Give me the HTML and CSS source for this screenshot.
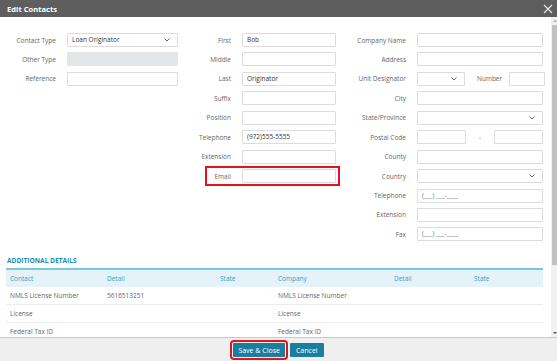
FILE: index.html
```html
<!DOCTYPE html>
<html lang="en">
<head>
    <meta charset="UTF-8">
    <title>Edit Contacts</title>
    <link rel="stylesheet" href="styles.css">
</head>
<body>
    <div class="modal">
        <header class="modal-header">
            <span class="title">Edit Contacts</span>
            <svg class="close" width="10" height="10" viewBox="0 0 10 10">
                <path d="M1 1 L9 9 M9 1 L1 9" stroke="#e6e6e6" stroke-width="1.2" fill="none"/>
            </svg>
        </header>

        <div class="modal-body">
            <div class="content">
                <div class="form">
                    <div class="col col-1">
                        <div class="row">
                            <label>Contact Type</label>
                            <div class="input select">Loan Originator
                                <svg class="chev" width="6" height="4" viewBox="0 0 6 4"><path d="M0.5 0.5 L3 3 L5.5 0.5" stroke="#666" fill="none"/></svg>
                            </div>
                        </div>
                        <div class="row">
                            <label>Other Type</label>
                            <div class="input disabled"></div>
                        </div>
                        <div class="row">
                            <label>Reference</label>
                            <div class="input"></div>
                        </div>
                    </div>

                    <div class="col col-2">
                        <div class="row"><label>First</label><div class="input">Bob</div></div>
                        <div class="row"><label>Middle</label><div class="input"></div></div>
                        <div class="row"><label>Last</label><div class="input">Originator</div></div>
                        <div class="row"><label>Suffix</label><div class="input"></div></div>
                        <div class="row"><label>Position</label><div class="input"></div></div>
                        <div class="row"><label>Telephone</label><div class="input">(972)555-5555</div></div>
                        <div class="row"><label>Extension</label><div class="input"></div></div>
                        <div class="row highlight"><label>Email</label><div class="input"></div></div>
                    </div>

                    <div class="col col-3">
                        <div class="row"><label>Company Name</label><div class="input"></div></div>
                        <div class="row"><label>Address</label><div class="input"></div></div>
                        <div class="row">
                            <label>Unit Designator</label>
                            <div class="input select unit">
                                <svg class="chev" width="6" height="4" viewBox="0 0 6 4"><path d="M0.5 0.5 L3 3 L5.5 0.5" stroke="#666" fill="none"/></svg>
                            </div>
                            <span class="sub-label">Number</span>
                            <div class="input number"></div>
                        </div>
                        <div class="row"><label>City</label><div class="input"></div></div>
                        <div class="row">
                            <label>State/Province</label>
                            <div class="input select">
                                <svg class="chev" width="6" height="4" viewBox="0 0 6 4"><path d="M0.5 0.5 L3 3 L5.5 0.5" stroke="#666" fill="none"/></svg>
                            </div>
                        </div>
                        <div class="row">
                            <label>Postal Code</label>
                            <div class="input zip"></div>
                            <span class="dash">-</span>
                            <div class="input zip"></div>
                        </div>
                        <div class="row"><label>County</label><div class="input"></div></div>
                        <div class="row">
                            <label>Country</label>
                            <div class="input select">
                                <svg class="chev" width="6" height="4" viewBox="0 0 6 4"><path d="M0.5 0.5 L3 3 L5.5 0.5" stroke="#666" fill="none"/></svg>
                            </div>
                        </div>
                        <div class="row"><label>Telephone</label><div class="input mask">(___) ___-____</div></div>
                        <div class="row"><label>Extension</label><div class="input"></div></div>
                        <div class="row"><label>Fax</label><div class="input mask">(___) ___-____</div></div>
                    </div>
                </div>

                <h3 class="section-title">Additional Details</h3>
                <table class="details">
                    <colgroup>
                        <col style="width:97px"><col style="width:113px"><col style="width:58px">
                        <col style="width:116px"><col style="width:80px"><col>
                    </colgroup>
                    <thead>
                        <tr><th>Contact</th><th>Detail</th><th>State</th><th>Company</th><th>Detail</th><th>State</th></tr>
                    </thead>
                    <tbody>
                        <tr><td>NMLS License Number</td><td>5616513251</td><td></td><td>NMLS License Number</td><td></td><td></td></tr>
                        <tr><td>License</td><td></td><td></td><td>License</td><td></td><td></td></tr>
                        <tr><td>Federal Tax ID</td><td></td><td></td><td>Federal Tax ID</td><td></td><td></td></tr>
                    </tbody>
                </table>
            </div>

            <div class="scrollbar">
                <span class="arrow up"></span>
                <div class="thumb"></div>
                <span class="arrow down"></span>
            </div>
        </div>

        <footer class="modal-footer">
            <button class="btn btn-primary">Save &amp; Close</button>
            <button class="btn">Cancel</button>
        </footer>
    </div>
</body>
</html>
```

FILE: styles.css
```css
body {
    margin: 0;
    font-family: 'Open Sans', sans-serif;
    font-size: 6.5px;
    color: #555;
    background: #fff;
}

.modal {
    width: 557px;
    height: 361px;
    display: flex;
    flex-direction: column;
    overflow: hidden;
}

.modal-header {
    height: 17px;
    flex: none;
    background: #5e5e5e;
    display: flex;
    align-items: center;
    justify-content: space-between;
    padding: 0 4px 0 7px;
}

.title {
    color: #fff;
    font-weight: bold;
    font-size: 7.6px;
}

.modal-body {
    flex: 1;
    display: flex;
    overflow: hidden;
    border-bottom: 1px solid #c9c9c9;
}

.content {
    flex: 1;
    padding: 16px 6px 0 8px;
}

.form {
    display: flex;
}

.col {
    display: flex;
    flex-direction: column;
    gap: 5.45px;
}

.row {
    display: flex;
    align-items: center;
    height: 14px;
}

.row label {
    text-align: right;
    margin-right: 11px;
    color: #666;
}

.col-1 label { width: 48px; }
.col-1 .input { width: 111px; }
.col-2 label { width: 53px; }
.col-2 .input { width: 94px; }
.col-3 label { width: 70px; }
.col-3 .input { width: 126px; }

.input {
    box-sizing: border-box;
    height: 14px;
    border: 1px solid #dcdcdc;
    border-radius: 1px;
    background: #fff;
    padding: 0 4px;
    line-height: 12px;
    color: #333;
    display: flex;
    align-items: center;
    justify-content: space-between;
}

.input.disabled {
    background: #e4e7ea;
    border-color: #e4e7ea;
}

.input.mask {
    color: #777;
}

.chev {
    margin-right: 3px;
}

.col-3 .input.unit { width: 48px; justify-content: flex-end; }
.col-3 .input.select { justify-content: flex-end; }
.col-1 .input.select { justify-content: space-between; }

.sub-label {
    color: #666;
    margin: 0 7px 0 12px;
}

.col-3 .input.number { width: 36px; }

.col-3 .input.zip { width: 49px; }

.dash {
    width: 28px;
    text-align: center;
    color: #888;
}

.highlight {
    position: relative;
}

.highlight::after {
    content: "";
    position: absolute;
    left: 27px;
    right: -4px;
    top: -3px;
    bottom: -3px;
    border: 2px solid #e2141c;
}

.section-title {
    margin: 15px 0 0 -1px;
    font-size: 6.6px;
    line-height: 10px;
    text-transform: uppercase;
    color: #1b8eb0;
    font-weight: bold;
}

.details {
    width: 537px;
    margin: 2px 0 0 -2px;
    border-collapse: collapse;
    table-layout: fixed;
    border-top: 2px solid #7cc4da;
}

.details th {
    background: #e3f3f8;
    color: #3a9fc0;
    font-weight: normal;
    text-align: left;
    height: 17px;
    padding: 0 4px;
}

.details td {
    height: 17px;
    padding: 0 4px;
    color: #666;
    border-bottom: 1px solid #ececec;
}

.scrollbar {
    width: 7px;
    flex: none;
    background: #f1f1f1;
    display: flex;
    flex-direction: column;
    align-items: center;
    padding-top: 3px;
}

.thumb {
    width: 6px;
    height: 240px;
    margin-top: 3px;
    background: #c1c1c1;
}

.arrow {
    width: 0;
    height: 0;
    border-left: 2px solid transparent;
    border-right: 2px solid transparent;
}

.arrow.up {
    border-bottom: 2px solid #a3a3a3;
}

.arrow.down {
    margin-top: auto;
    margin-bottom: 3px;
    border-top: 2px solid #505050;
}

.modal-footer {
    height: 23px;
    flex: none;
    background: #efefef;
    display: flex;
    justify-content: center;
    align-items: center;
    gap: 5px;
    padding-left: 0;
}

.btn {
    font-family: 'Open Sans', sans-serif;
    font-size: 7px;
    color: #fff;
    background: #1b7e9e;
    border: none;
    height: 14px;
    padding: 0 6px;
    border-radius: 1px;
    margin-top: 1px;
    white-space: nowrap;
}

.btn-primary {
    padding: 0 5px;
    outline: 2px solid #e2141c;
    outline-offset: 1px;
}
```
